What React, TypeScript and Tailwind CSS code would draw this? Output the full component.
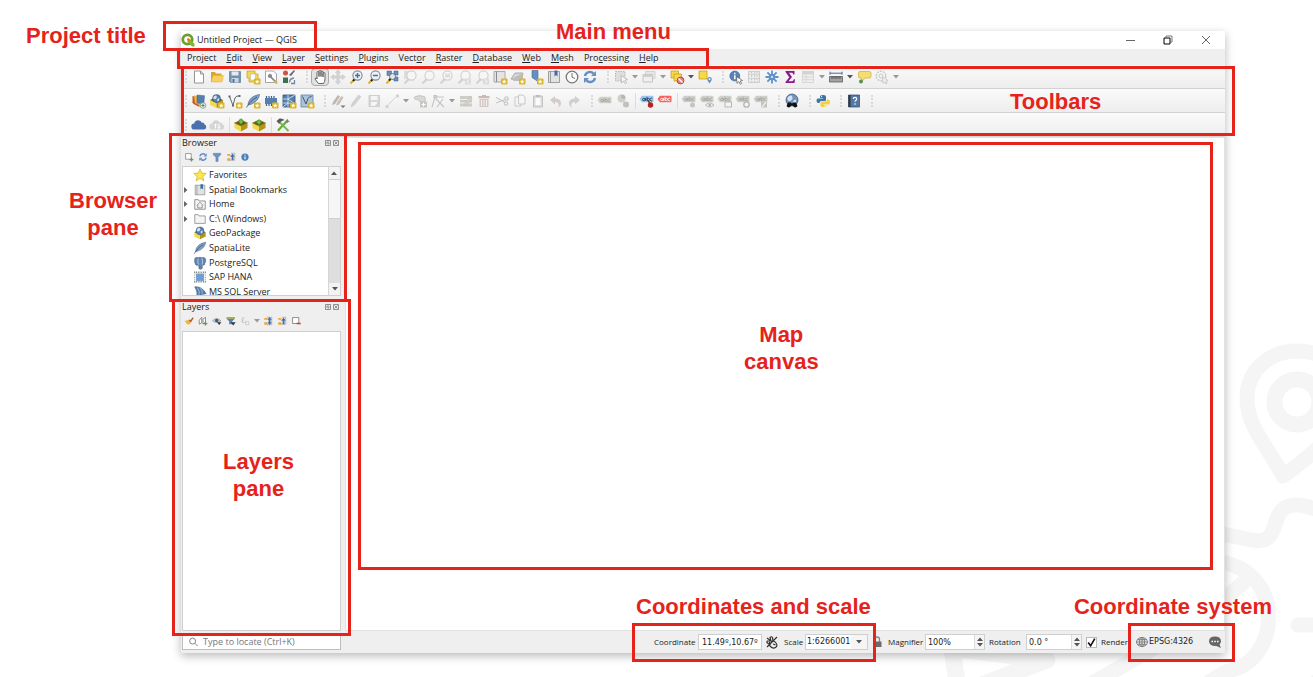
import React from "react";

type Children = { children?: React.ReactNode };

/* ---------- icon building blocks ---------- */

const G = "#d2d2d2";
const GD = "#bcbcbc";
const BLUE = "#6490c4";
const YEL = "#f5d949";
const GOLD = "#d8b52c";

const Badge = ({ c = GOLD }: { c?: string }) => (
  <g>
    <rect x="9" y="9.5" width="6.5" height="6" rx="1" fill={c} />
    <path d="M12.2 10.2l.7 1.6 1.7.2-1.3 1 .4 1.7-1.5-.9-1.5.9.4-1.7-1.3-1 1.7-.2z" fill="#fffbe0" />
  </g>
);

const Lens = ({ off, children }: { off?: boolean } & Children) => (
  <g fill="none">
    <path d="M7 9.8L2.5 14.5" stroke={off ? G : GOLD} strokeWidth="2" />
    <path d="M7 9.8L5 12" stroke={off ? G : "#222"} strokeWidth="2" />
    <circle cx="9.5" cy="6.5" r="4.6" fill={off ? "#f6f6f6" : "#eaf1f8"} stroke={off ? "#cfcfcf" : "#888"} strokeWidth="1.1" />
    {children}
  </g>
);

const Tag = ({ fill = "#d0d0cb", ink = "#a4a4a0" }: { fill?: string; ink?: string }) => (
  <g>
    <path d="M.5 6l2.400-3.200H13.500q1 0 1 1v4.400q0 1-1 1H2.900z" fill={fill} />
    <g fill="none" stroke={ink} strokeWidth=".9">
      <circle cx="4.800" cy="6.500" r="1.200" />
      <path d="M6.400 5v2.800M8 3.800v4" />
      <circle cx="9.300" cy="6.500" r="1.200" />
      <path d="M13.200 5.400a1.400 1.400 0 100 2.200" />
    </g>
  </g>
);

const Box = ({ children }: Children) => (
  <g>
    <path d="M1.500 6L8 9v5.500L1.500 11z" fill="#f3da4b" />
    <path d="M8 9l6.500-3v5L8 14.500z" fill="#b8931a" />
    <path d="M1.500 6L8 3l6.500 3L8 9z" fill="#6a5814" stroke="#8d730f" strokeWidth=".6" />
    {children}
  </g>
);

const Globe = ({ x = 8, y = 6, r = 4.5, c = "#4f7fb5" }: { x?: number; y?: number; r?: number; c?: string }) => (
  <g transform={`translate(${x} ${y}) scale(${r})`}>
    <circle r="1" fill={c} stroke="#35506f" strokeWidth=".12" />
    <path d="M-.8-.3Q-.5-.9 0-.7L.1-.2-.3.2-.7.1zM.2.1L.7-.1.6.6.2.7z" fill="#d5e2ef" />
  </g>
);

const Sync = ({ c = BLUE }: { c?: string }) => (
  <g fill="none" stroke={c} strokeWidth="2.4">
    <path d="M3 7a5 5 0 018.6-2.4" />
    <path d="M13 9a5 5 0 01-8.6 2.4" />
    <path d="M14 2v5H9zM2 14V9h5z" fill={c} stroke="none" />
  </g>
);

const Feather = () => (
  <g>
    <path d="M3 12C3.500 6 8 2.500 14.500 1.500 14 5 12 9 5.500 11.500z" fill="#7ba1cc" stroke="#47617e" strokeWidth=".6" />
    <path d="M1.500 14.500C4 10 7.500 6.500 12 4" fill="none" stroke="#3c4d60" strokeWidth=".8" />
  </g>
);

const Pencil = ({ c = G }: { c?: string }) => (
  <path d="M3 14l1-3.500L10.500 2l2.500 1.800L6.300 12z" fill={c} stroke="#c4c4c4" strokeWidth=".5" />
);

const icons: Record<string, React.ReactNode> = {
  new: <path d="M3.500 2h6l3 3v9h-9zM9.500 2v3h3" fill="#fff" stroke="#8a8a8a" strokeWidth=".9" />,
  open: (
    <g>
      <path d="M2 3h4l1 1.500h5.500V13H2z" fill="#d9a62b" />
      <path d="M2 13l2-6.500h10.500L13 13z" fill="#f6d162" stroke="#e0ae35" strokeWidth=".5" />
    </g>
  ),
  save: (
    <g>
      <path d="M2.500 2.500h11v11h-10l-1-1z" fill="#6d93bd" stroke="#52708f" strokeWidth=".6" />
      <path d="M4.500 2.500h7v4h-7z" fill="#e9e9e9" />
      <path d="M4.500 9h7v4.500h-7z" fill="#cfd6de" />
      <path d="M5.500 10h2v3.500h-2z" fill="#52708f" />
    </g>
  ),
  layout: (
    <g>
      <path d="M2 2h8v3h3v8H4V9H2z" fill={YEL} stroke="#c79b1f" strokeWidth=".7" />
      <path d="M5.500 5h5v6h-5z" fill="#fff" stroke="#aaa" strokeWidth=".5" />
      <Badge />
    </g>
  ),
  layouts: (
    <g>
      <path d="M2.500 2h8l3 3v8.500h-11z" fill="#fff" stroke="#8f8f8f" strokeWidth=".8" />
      <path d="M5 6l2-1.500L9 6v2l4 4-1.200 1.200L7.500 9 5 8.500z" fill="#8a8a8a" />
      <path d="M11.500 12l2.500 2.500" stroke={GOLD} strokeWidth="2" />
    </g>
  ),
  style: (
    <g>
      <circle cx="4.500" cy="4" r="2.500" fill="#d2503d" />
      <path d="M2 8.500h5v5.500H2z" fill="#3f6f4c" />
      <path d="M8 6l5-5 1 1-4 5z" fill="#6b6b6b" />
      <path d="M8.500 13.500q0-4 4.500-4.500M10 14.500h3.500V11" fill="none" stroke="#6b8ba8" strokeWidth="1.300" />
    </g>
  ),
  hand: (
    <path
      d="M5 10V3.500a1 1 0 012 0V7.500V2.500a1 1 0 012 0V7.500V3a1 1 0 012 0V8V4.500a1 1 0 012 0V10Q13 12.500 11.500 14.500H6.500L3 10Q3.300 8 5 9.500z"
      fill="#fff"
      stroke="#555"
      strokeWidth=".9"
      strokeLinejoin="round"
    />
  ),
  pansel: <path d="M8 1l2 2.500H9V7h3.500V6L15 8l-2.500 2V9H9v3.500h1L8 15l-2-2.500h1V9H3.500v1L1 8l2.500-2v1H7V3.500H6z" fill={G} stroke={G} strokeWidth="1.200" />,
  zoomin: (
    <Lens>
      <path d="M9.500 4v5M7 6.500h5" stroke="#3f71b0" strokeWidth="1.500" />
    </Lens>
  ),
  zoomout: (
    <Lens>
      <path d="M7 6.500h5" stroke="#3f71b0" strokeWidth="1.500" />
    </Lens>
  ),
  zoomfull: (
    <g>
      <path d="M3 2h4.500v4.500H3zM10 2h4v4h-4zM10 8h4v4h-4z" fill={BLUE} stroke="#46688f" strokeWidth=".6" />
      <circle cx="8.500" cy="7.500" r="3" fill="#dfe9f3" stroke="#555" strokeWidth=".8" />
      <path d="M6.500 10L2.500 14.500" stroke={GOLD} strokeWidth="2" />
      <path d="M6.500 10L5 11.500" stroke="#222" strokeWidth="2" />
    </g>
  ),
  zoomsel: (
    <g>
      <path d="M2 2h7v8H2z" fill="#dcdcdc" />
      <Lens off />
    </g>
  ),
  zoomlayer: <Lens off />,
  zoomnative: (
    <Lens off>
      <path d="M8 4.500v4M11 4.500v4M9.500 5.500v.8M9.500 7.200v.8" stroke="#c4c4c4" />
    </Lens>
  ),
  zoomlast: (
    <g>
      <Lens off />
      <path d="M9 9.500h6v6H9z" fill="#dadada" />
      <path d="M13 10.500l-2 2 2 2" fill="none" stroke="#fff" />
    </g>
  ),
  zoomnext: (
    <g>
      <Lens off />
      <path d="M9 9.500h6v6H9z" fill="#dadada" />
      <path d="M11 10.500l2 2-2 2" fill="none" stroke="#fff" />
    </g>
  ),
  newmap: (
    <g>
      <path d="M2 2.500h11V13H2z" fill="#e4e4e4" stroke="#9a9a9a" strokeWidth=".8" />
      <path d="M4.500 2.500V13" stroke="#8a8a8a" />
      <Badge />
    </g>
  ),
  new3d: (
    <g>
      <path d="M1 10l4-6h8l-1 6z" fill="#d8d8d8" stroke="#9a9a9a" strokeWidth=".8" />
      <path d="M1 10l3 2h8l1-8" fill="#bdbdbd" />
      <Badge />
    </g>
  ),
  newbook: (
    <g>
      <path d="M4 1.500h6v11l-3-2-3-2z" fill={BLUE} stroke="#45688f" strokeWidth=".6" />
      <Badge />
    </g>
  ),
  bookmarks: (
    <g>
      <path d="M2.500 2.500h11v11h-11z" fill="#e2e2e2" stroke="#8c8c8c" strokeWidth=".8" />
      <path d="M4.500 2.500v11" stroke="#8c8c8c" strokeWidth=".8" />
      <path d="M8.500 1.500h3v6L10 6 8.500 7.500z" fill="#3e6ea8" />
    </g>
  ),
  clock: (
    <g fill="none" stroke="#777">
      <circle cx="8" cy="8" r="5.800" fill="#fafafa" strokeWidth="1.300" />
      <path d="M8 4v4.300l3 1.200" />
    </g>
  ),
  sync: <Sync />,
  select: (
    <g>
      <path d="M2.500 2.500h9.500v9.500H2.500z" fill="#dededa" stroke="#aaa" strokeWidth=".8" strokeDasharray="1.500 1" />
      <path d="M8 6.500l6.500 4-2.600.6 1.800 2.700-1.500.9-1.700-2.800L8.500 14z" fill="#f8f8f8" stroke="#aaa" strokeWidth=".7" />
    </g>
  ),
  selval: (
    <g>
      <path d="M4.500 2.500H14v7H4.500z" fill="#e6e6e6" stroke={G} />
      <path d="M2 5.500h9.500v7.500H2z" fill="#efefef" stroke="#c0c0c0" strokeWidth=".9" />
      <path d="M2 5.500h9.500V8H2z" fill="#cfcfcf" />
    </g>
  ),
  deselect: (
    <g>
      <path d="M2 2h7.500v7H2z" fill={YEL} stroke="#c7a31b" strokeWidth=".8" />
      <path d="M5 5h7.500v7H5z" fill={YEL} stroke="#c7a31b" strokeWidth=".8" />
      <circle cx="11.500" cy="11.500" r="3.400" fill="#e08983" stroke="#c8322b" strokeWidth=".9" />
      <path d="M9.500 9.500l4 4" stroke="#fff" strokeWidth="1.200" />
    </g>
  ),
  selloc: (
    <g>
      <path d="M2 2h8v8H2z" fill={YEL} stroke="#c7a31b" strokeWidth=".8" />
      <path d="M12.500 14.500q-2.300-3-2.300-4.200a2.300 2.300 0 014.600 0q0 1.200-2.300 4.200z" fill="#6c93be" />
      <circle cx="12.500" cy="10.200" r=".9" fill="#fff" />
    </g>
  ),
  identify: (
    <g>
      <circle cx="6.800" cy="7" r="5" fill="#5683b8" stroke="#3c6390" strokeWidth=".6" />
      <path d="M6.800 3.700v1.500M6.800 6.300v4" stroke="#fff" strokeWidth="1.500" />
      <path d="M8.500 7.500l6 4-2.400.5 1.500 2.500-1.300.7-1.400-2.600-1.900 1.700z" fill="#fff" stroke="#555" strokeWidth=".7" />
    </g>
  ),
  calc: (
    <g stroke="#c8c8c8" strokeWidth=".9" fill="#ececec">
      <path d="M2.500 2.500h11v11h-11z" />
      <path d="M2.500 5.500h11M2.500 9.500h11M5.500 3v10M8.500 3v10M11 3v10" strokeDasharray="2 1" />
    </g>
  ),
  gear: (
    <g stroke="#5f92ca" strokeWidth="1.800">
      <path d="M8 1.500v13M1.500 8h13M3.400 3.400l9.200 9.200M12.600 3.400l-9.200 9.200" />
      <circle cx="8" cy="8" r="3.200" fill="#5f92ca" stroke="none" />
      <circle cx="8" cy="8" r="1.100" fill="#eef" stroke="none" />
    </g>
  ),
  sigma: <path d="M3.500 2h9v3.500h-1.200q-.2-1.700-1.700-1.700H7L10 7.900 6.500 12.200h3.300q1.700 0 2-2h1.200L12.500 14h-9v-1L7.300 8.200 3.500 3z" fill="#8d1a90" />,
  table: (
    <g stroke="#d4d4d4" fill="#f0f0f0" strokeWidth=".9">
      <path d="M2.500 2.500h11v11h-11z" />
      <path d="M2.500 2.500h11V5h-11z" fill="#d4d4d4" />
      <path d="M2.500 8h11M2.500 10.700h11M6 5v8" />
    </g>
  ),
  measure: (
    <g>
      <path d="M2 4.200h12M2 2.700v3M14 2.700v3" stroke="#3e6a9c" strokeWidth="1" />
      <path d="M1.500 7.500h13V13h-13z" fill="#a3a3a3" stroke="#5e5e5e" strokeWidth=".8" />
      <path d="M4 7.500v2.500M6 7.500v2M8 7.500v2.500M10 7.500v2M12 7.500v2.500" stroke="#333" strokeWidth=".8" />
    </g>
  ),
  tips: (
    <g>
      <path d="M4 2.500h9.500q1.500 0 1.500 1.500v3.500q0 1.500-1.500 1.500H9l-3.500 4V9H4Q2.500 9 2.500 7.500V4q0-1.500 1.500-1.500z" fill="#f4de72" stroke="#cdac35" strokeWidth=".7" />
      <circle cx="5" cy="12.500" r="2" fill="#5c8f58" />
    </g>
  ),
  osm: (
    <g fill="none" stroke="#cacaca">
      <circle cx="7" cy="7" r="4.800" strokeWidth="1.500" strokeDasharray="2 1" />
      <circle cx="7" cy="7" r="2" />
      <path d="M8.500 8l5.500 3.500-2.200.6 1.300 2.100-1.200.8-1.400-2.300-1.500 1.500z" fill="#f3f3f3" />
    </g>
  ),
  dsm: (
    <g>
      <path d="M1.500 3l6 1.500-1 7.500-5-2z" fill="#c65a33" />
      <path d="M3 2.500l7 1v9l-6-2z" fill="#efb92e" />
      <path d="M6 2l7.500.7-.7 8L6 10z" fill="#557fb0" stroke="#3e618b" strokeWidth=".5" />
      <path d="M1.500 9l7 3v2l-6-3z" fill="#c65a33" />
      <circle cx="12" cy="12.500" r="2.800" fill="#eee" stroke="#7a9b74" strokeWidth=".8" />
      <path d="M12 11v3M10.500 12.500h3" stroke="#4e8a45" />
    </g>
  ),
  gpkg: (
    <g>
      <path d="M1.500 7L8 10v5L1.500 12z" fill="#f3da4b" />
      <path d="M14.500 7L8 10v5l6.500-3z" fill="#b8931a" />
      <path d="M1.500 7L8 4l6.500 3L8 10z" fill="#6a5814" />
      <Globe x={8} y={5.500} r={4.500} />
    </g>
  ),
  gpkgnew: (
    <g>
      <path d="M1 7l6.500 3v5L1 12z" fill="#f3da4b" />
      <path d="M14 7l-6.500 3v5L14 12z" fill="#b8931a" />
      <path d="M1 7l6.500-3L14 7l-6.500 3z" fill="#6a5814" />
      <Globe x={7.500} y={5.500} r={4} />
      <Badge />
    </g>
  ),
  shp: (
    <g>
      <path d="M2.500 3.500l3.500 9 2-7.500q1-2.500 4-2" fill="none" stroke="#5f6670" strokeWidth="1" />
      <path d="M1.500 2.500h2v2h-2zM5 11.500h2v2H5zM11.500 2h2v2h-2z" fill="#5f6670" />
      <Badge />
    </g>
  ),
  lite: (
    <g>
      <Feather />
      <Badge />
    </g>
  ),
  mem: (
    <g>
      <path d="M2 5h12v6H2z" fill="#557fb0" />
      <path d="M3.500 3v2M6 3v2M8.500 3v2M11 3v2M3.500 11v2M6 11v2M8.500 11v2" stroke="#3e618b" strokeWidth="1.200" />
      <Badge />
    </g>
  ),
  mesh: (
    <g>
      <path d="M2 2h12v12H2z" fill="#557fb0" stroke="#2f4e75" strokeWidth=".8" />
      <path d="M2 6h5l7-4M7 2v12M2 14l5-4 7 1M7 6l7 5M2 10h5" fill="none" stroke="#e2ecf6" strokeWidth=".8" />
      <Badge />
    </g>
  ),
  virt: (
    <g>
      <path d="M2 2h12v12H2z" fill="#a9c4df" stroke="#5f81a5" strokeWidth=".8" />
      <path d="M3.500 3.500L7 11l2-5.500q1-2 3.500-2" fill="none" stroke="#4d5661" strokeWidth="1" />
      <Badge />
    </g>
  ),
  edits: (
    <g>
      <path d="M2 12l1-3 5-7 2 1.500-5 7.500z" fill="#bdb5b0" />
      <path d="M6 12.500l1-3L11.500 3l2 1.500-4.500 7z" fill="#c6c0b8" />
      <path d="M10.500 12.500h5l-2.500 2.500z" fill="#777" />
    </g>
  ),
  pencil: <Pencil />,
  saveoff: (
    <g>
      <path d="M3 2.500h10.500v11H3z" fill="#d8d8d8" stroke="#c8c8c8" strokeWidth=".8" />
      <path d="M5 3h6.500v4H5zM5 9h6v4H5z" fill="#f5f5f5" />
      <path d="M9 13l4-5 1.500 1-4 5z" fill={G} />
    </g>
  ),
  line: (
    <g>
      <path d="M3 13L13 3" stroke={G} />
      <path d="M1.500 12h3v3h-3zM12 1.500h3v3h-3z" fill={G} />
    </g>
  ),
  addpoly: (
    <g>
      <path d="M2.500 4q4-2.500 10-.5 1.500 2 .5 5H7.500q-1-2.500-4-2Q1.500 6 2.500 4z" fill="#d8d8d4" stroke="#b9b9b9" strokeWidth=".7" />
      <path d="M8 8.500h7v6H8z" fill="#c8c8c4" />
      <path d="M11.500 9.500v4M9.500 11.500h4" stroke="#fff" />
    </g>
  ),
  vertex: (
    <g fill="none" stroke="#c4c4c4" strokeWidth="1.100">
      <path d="M2 14L5 4h9M6 6l8 8M13 6l-6 8" />
      <path d="M4 2.500h2.500V5H4z" fill={G} />
    </g>
  ),
  modify: (
    <g>
      <path d="M2 3h12v10.500H2z" fill="#cdcdc7" />
      <path d="M2 6.500h12M2 10h12" stroke="#eee" />
      <path d="M6 12l6-8 2 1.500-6 7.500z" fill="#dad4ca" stroke="#b5b0a8" strokeWidth=".5" />
    </g>
  ),
  trash: (
    <g>
      <path d="M2.500 3h11v2.200h-11zM6 2h4v1.500H6z" fill="#cbb9b5" />
      <path d="M3.500 6h9v8h-9z" fill="#d5c8c5" />
      <path d="M5.500 7v6M8 7v6M10.500 7v6" stroke="#f2f2f2" />
    </g>
  ),
  cut: (
    <g fill="none" stroke="#c8c8c8" strokeWidth="1.300">
      <path d="M2 4.500l8.500 4.500M2 10l9-3.500" />
      <circle cx="12.500" cy="5.500" r="1.700" />
      <circle cx="12" cy="10.500" r="1.700" />
    </g>
  ),
  copy: (
    <g fill="#f6f6f6" stroke="#c8c8c8">
      <path d="M3 4h5l1 1v8H3z" />
      <path d="M6.500 2H11l2 2v7H6.500z" />
    </g>
  ),
  paste: (
    <g>
      <path d="M3.500 3h9v11h-9z" fill="#dcdcdc" stroke="#c4c4c4" />
      <path d="M5.500 5h5v7h-5z" fill="#fbfbfb" />
      <path d="M6 2h4v2H6z" fill={GD} />
    </g>
  ),
  undo: <path d="M2 6l5-4v2.500q6 0 6 4.500 0 3-3 4.500 1-1.500.7-3Q10.200 8 7 8v2.500z" fill="#d3cdca" transform="translate(0 1)" />,
  redo: <path d="M14 6L9 2v2.500Q3 4.500 3 9q0 3 3 4.500-1-1.500-.7-3Q5.800 8 9 8v2.500z" fill="#cdd1cc" transform="translate(0 1)" />,
  label: (
    <g transform="translate(0 1)">
      <Tag />
    </g>
  ),
  diagram: (
    <g>
      <circle cx="6.500" cy="5.500" r="4" fill="#cfcfcb" />
      <path d="M6.500 5.500V1.500a4 4 0 014 4z" fill="#b5b5b0" />
      <circle cx="11" cy="11.500" r="3" fill="#c0c0bc" />
    </g>
  ),
  labelpin: (
    <g>
      <Tag fill="#9cc6f2" ink="#24384e" />
      <path d="M9 8l2 2" stroke="#333" strokeWidth="1.200" />
      <circle cx="11.500" cy="12" r="2.700" fill="#b8211d" />
    </g>
  ),
  labelred: <Tag fill="#f8605c" ink="#fff" />,
  lab1: (
    <g>
      <Tag />
      <circle cx="11.500" cy="12" r="2.500" fill="#c9c2c2" />
    </g>
  ),
  lab2: (
    <g>
      <Tag />
      <path d="M6.500 12q4-4 8.500 0-4.500 4-8.500 0z" fill="#efefef" stroke="#aaa" strokeWidth=".8" />
      <circle cx="10.700" cy="12" r="1.200" fill="#aaa" />
    </g>
  ),
  lab3: (
    <g>
      <Tag />
      <path d="M8 9h6.500v5H8z" fill="#f4f4f4" stroke="#b5b5b5" />
    </g>
  ),
  lab4: (
    <g>
      <Tag />
      <circle cx="11.500" cy="11.500" r="2.700" fill="#f2f2f2" stroke="#b5b5b5" strokeWidth="1.300" />
    </g>
  ),
  lab5: (
    <g>
      <Tag />
      <path d="M8 9h6v5.500H8z" fill="#c3c3be" />
      <path d="M9 14l4-5" stroke="#eee" strokeWidth="1.300" />
    </g>
  ),
  search: (
    <g>
      <Globe x={8} y={7} r={6} c="#7295bd" />
      <path d="M2.500 13l1.500-3.500h3l.5 1h1l.5-1h3l1.500 3.500q-1.500 2.500-4 .8L9 12.500H7l-.5 1.300q-2.500 1.700-4-.8z" fill="#111" />
    </g>
  ),
  python: (
    <g>
      <path d="M8 2q3-.2 3 1.500V7Q11 8 10 8H6.500Q4.500 8 4.500 10H3.300Q1.500 10 1.500 7.500T3.500 5.500H8V5H5V3.500Q5 2 8 2z" fill="#3a74a8" />
      <path d="M8.500 14q-3 .2-3-1.500V10q0-1.500 1.500-1.500h3.500q1.500 0 1.500-2h1q2 0 2 2.500t-2 2.500H8.500v.5h3V13q0 1-3 1z" fill="#f6cf3e" />
      <circle cx="6.600" cy="3.600" r=".6" fill="#fff" />
      <circle cx="10" cy="12.700" r=".6" fill="#fff" />
    </g>
  ),
  help: (
    <g>
      <path d="M2.500 2h11v12h-11z" fill="#5478a2" stroke="#2f4a69" strokeWidth=".7" />
      <path d="M2.500 2h2v12h-2z" fill="#32373d" />
      <path d="M7.300 6q0-1.600 1.700-1.600t1.700 1.500q0 1-1 1.500-.7.400-.7 1.400M9 10.200v1.500" fill="none" stroke="#fff" strokeWidth="1.200" />
    </g>
  ),
  cloud: <path d="M3.500 12.500a3 3 0 01-.3-6Q4 3.200 7.300 3.200q2.700 0 3.500 2.500 1-.4 1.900.3.900.7.800 1.600 1.800.4 1.800 2.500 0 2.200-2.300 2.400z" fill="#4a70ae" />,
  cloudoff: (
    <g>
      <path d="M3.500 12.500a3 3 0 01-.3-6Q4 3.200 7.300 3.200q2.700 0 3.500 2.500 1-.4 1.900.3.900.7.800 1.600 1.800.4 1.800 2.500 0 2.200-2.300 2.400z" fill="#d5d5d5" />
      <path d="M6.500 11.500V7M5 8.500L6.500 7 8 8.500M10 7v4.500M8.700 10L10 11.500l1.400-1.500" fill="none" stroke="#fff" />
    </g>
  ),
  boxdown: (
    <Box>
      <path d="M8 7.500L5 4h1.800V2h2.400v2H11z" fill="#6cc83f" stroke="#2e6e15" strokeWidth=".4" />
    </Box>
  ),
  boxup: (
    <Box>
      <path d="M8 2.500L5 6h1.800v1.500h2.400V6H11z" fill="#6cc83f" stroke="#2e6e15" strokeWidth=".4" />
    </Box>
  ),
  tools: (
    <g>
      <path d="M3 13.500L12 4" stroke="#5bb530" strokeWidth="2.200" />
      <path d="M4.500 5L13.500 14" stroke="#7fae56" strokeWidth="1.800" />
      <path d="M1.500 4l3-2.500q3-.5 5 1.500L6 4.500 4 7z" fill="#5a5a5a" />
      <path d="M10.500 4.500l2-3 .5 2 2 .5-3 2z" fill="#7b7b7b" />
    </g>
  ),
  /* dock toolbars */
  addsel: (
    <g>
      <path d="M2.500 2.500h9v9h-9z" fill="#fff" stroke="#888" strokeWidth="1.300" />
      <path d="M12 9v6M9 12h6" stroke="#58a04a" strokeWidth="2" />
    </g>
  ),
  filter: <path d="M2 2h12v2.500L9.800 8.500V15H6.200V8.500L2 4.500z" fill="#6c93c0" stroke="#4d719c" strokeWidth=".6" />,
  filter2: (
    <g>
      <path d="M1 2h13v2.500L10 8.500V13H5V8.500L1 4.500z" fill="#5b83b0" />
      <path d="M1 2h13v2.500H1z" fill="#b5b64a" />
      <path d="M7.500 10h8l-4 5z" fill="#333" />
    </g>
  ),
  collapse: (
    <g>
      <path d="M2 3h5v3H2zM2 10h5v4H2z" fill="#eda43c" />
      <path d="M6 7h6M6 13h8V2H8" fill="none" stroke="#999" />
      <path d="M10.500 2.500L14 7h-2v6H9V7H7z" fill="#3f70ad" />
    </g>
  ),
  expand: (
    <g>
      <path d="M2 3h5v3H2zM2 10h5v4H2z" fill="#eda43c" />
      <path d="M6 14h8V2H6" fill="none" stroke="#999" />
      <path d="M10.500 1.500L14 6h-2v4h2l-3.500 4.500L7 10h2V6H7z" fill="#3f70ad" />
    </g>
  ),
  info: (
    <g>
      <circle cx="8" cy="8" r="5.800" fill="#4c80ba" />
      <path d="M8 4.300v1.800M8 7.200v4.500" stroke="#fff" strokeWidth="1.800" />
    </g>
  ),
  brush: (
    <g>
      <path d="M9 8l5-6 1.500 1.500L11 10z" fill="#a5632e" />
      <path d="M1 8l6-1.500 4 4L8 14Q4 13 1 8z" fill="#f0b53a" />
      <path d="M7 6.500l4 4 1-1.500-3.500-3.500z" fill="#d9472f" />
    </g>
  ),
  group: (
    <g>
      <path d="M2 7l4-5v9l-4 2zM8 5l4-3v8l-4 3z" fill="#fafafa" stroke="#777" strokeWidth="1.300" />
      <path d="M12 9v6M9 12h6" stroke="#58a04a" strokeWidth="2" />
    </g>
  ),
  eye: (
    <g>
      <path d="M1 7.500Q7 1 14 7.500 7 13 1 7.500z" fill="#ddd" stroke="#777" />
      <circle cx="7.500" cy="7" r="2.800" fill="#355f8c" />
      <path d="M8 10h7l-3.500 4.500z" fill="#333" />
    </g>
  ),
  expr: (
    <g fill="none" stroke="#bbb" strokeWidth="1.400">
      <path d="M7 3Q3 2 3 4.500 3 6 5.500 6.500 2.500 7 3 9.500 4 11 7 10" />
      <path d="M9 9h5v5H9z" strokeDasharray="2 1" />
    </g>
  ),
  remove: (
    <g>
      <path d="M2.500 2.500h10v9.500h-10z" fill="#fff" stroke="#777" strokeWidth="1.300" />
      <path d="M9 12h6.500" stroke="#d63b33" strokeWidth="2.500" />
    </g>
  ),
  /* browser tree */
  star: <path d="M8 1l2 4.800 5.200.4-4 3.400 1.300 5.100L8 11.900l-4.500 2.800 1.300-5.100-4-3.400L6 5.800z" fill="#fbe84e" stroke="#d0b029" strokeWidth=".8" />,
  home: (
    <g fill="#f4f4f4" stroke="#7d7d7d" strokeWidth=".9">
      <path d="M2 3h4l1 1.500h7V14H2z" />
      <path d="M4.500 9.500L8 6l3.500 3.500M5.500 9v3.500h5V9" />
    </g>
  ),
  folder: <path d="M2 3h4l1 1.500h7V13H2z" fill="#f4f4f4" stroke="#8a8a8a" strokeWidth=".9" />,
  feather: <Feather />,
  pg: (
    <g>
      <path d="M2 3q1-2 4-1 2-1 4 0 4-1 4.500 2 .3 2.500-1.500 5 1 .8-.5 1.200-1.500.3-2-.2V14q-2 2-3.500.5L6.500 10Q3 12 2 7z" fill="#5f88b9" stroke="#33557f" strokeWidth=".7" />
      <path d="M6 3q-1.500 3 .5 7M10 2.500q1.800 3 .5 7.500" fill="none" stroke="#d5e0ec" strokeWidth=".8" />
    </g>
  ),
  hana: (
    <g>
      <path d="M1.500 2.500h13M1.500 13.500h13" stroke="#777" strokeWidth="1.600" strokeDasharray="1 1" />
      <path d="M2 2v12.500M14 2v12.500" stroke="#999" strokeWidth="1.200" strokeDasharray="1 1" />
      <path d="M3.500 4h9v8.500h-9z" fill="#6f9dcd" />
    </g>
  ),
  mssql: (
    <g>
      <path d="M2 2q8-1 13 8-5 0-11 4 2-6-2-12z" fill="#537cae" stroke="#34577f" strokeWidth=".6" />
      <path d="M5 3q3 4 2 8M8.500 3.500q2.500 3 2 6.500" fill="none" stroke="#dbe6f1" strokeWidth=".7" />
    </g>
  ),
};

const Icon = ({ name, className = "size-4" }: { name: string; className?: string }) => (
  <svg viewBox="0 0 16 16" className={className} aria-hidden="true">
    {icons[name]}
  </svg>
);

const Caret = ({ dark }: { dark?: boolean }) => (
  <svg viewBox="0 0 6 4" className="h-1 w-1.5" aria-hidden="true">
    <path d="M0 0h6L3 3.500z" fill={dark ? "#555" : "#999"} />
  </svg>
);

/* ---------- toolbars ---------- */

// "|" handle, "-" separator, "v"/"V" drop-down arrow (disabled/enabled), otherwise an icon name
const rowOne =
  "new open save layout layouts style | hand pansel zoomin zoomout zoomfull zoomsel zoomlayer zoomnative zoomlast zoomnext newmap new3d newbook bookmarks clock sync | select v selval v deselect V selloc | identify calc gear sigma table v measure V tips osm v";
const rowTwo =
  "dsm gpkgnew shp lite mem mesh virt | edits pencil saveoff line v addpoly vertex v modify trash cut copy paste undo redo | label diagram - labelpin labelred - lab1 lab2 lab3 lab4 lab5 | search | python | help |";
const rowThree = "cloud cloudoff - boxdown boxup - tools";

const Dots = () => <span className="h-3 w-0 border-l-2 border-dotted border-[#dadada]" />;

const Toolbar = ({ items, label }: { items: string; label: string }) => (
  <div role="toolbar" aria-label={label} className="flex h-6 items-center border-b border-[#d2d2d2] bg-linear-to-b from-[#fafafa] to-[#eeeeee]">
    <span className="flex w-[9px] justify-end pr-[3px]">
      <Dots />
    </span>
    {items.split(" ").map((it, i) => {
      if (it === "|")
        return (
          <span key={i} className="flex w-[13px] justify-end pr-[3px]">
            <Dots />
          </span>
        );
      if (it === "-")
        return (
          <span key={i} className="flex w-1.5 justify-center">
            <span className="h-4 w-px bg-[#dcdcdc]" />
          </span>
        );
      if (it === "v" || it === "V")
        return (
          <button key={i} type="button" aria-label="More options" className="flex h-4 w-2.5 items-center justify-center">
            <Caret dark={it === "V"} />
          </button>
        );
      return (
        <button
          key={i}
          type="button"
          aria-label={it}
          className={
            it === "hand"
              ? "flex size-[18px] items-center justify-center rounded-sm border border-[#a9a9a9] bg-[#e2e2e2]"
              : "flex size-[18px] items-center justify-center"
          }
        >
          <Icon name={it} />
        </button>
      );
    })}
  </div>
);

/* ---------- annotations ---------- */

const Frame = ({ className }: { className: string }) => (
  <div aria-hidden="true" className={`pointer-events-none absolute z-20 border-3 border-[#e5231b] ${className}`} />
);

const Note = ({ className, children }: { className: string } & Children) => (
  <p className={`pointer-events-none absolute z-20 text-center font-['Liberation_Sans',sans-serif] text-[22px] leading-[27px] font-bold whitespace-nowrap text-[#e5231b] ${className}`}>
    {children}
  </p>
);

/* ---------- window parts ---------- */

const menus: [string, string, string][] = [
  ["Pro", "j", "ect"],
  ["", "E", "dit"],
  ["", "V", "iew"],
  ["", "L", "ayer"],
  ["", "S", "ettings"],
  ["", "P", "lugins"],
  ["Vect", "o", "r"],
  ["", "R", "aster"],
  ["", "D", "atabase"],
  ["", "W", "eb"],
  ["", "M", "esh"],
  ["Pro", "c", "essing"],
  ["", "H", "elp"],
];

const tree: [string, string, boolean][] = [
  ["star", "Favorites", false],
  ["bookmarks", "Spatial Bookmarks", true],
  ["home", "Home", true],
  ["folder", "C:\\ (Windows)", true],
  ["gpkg", "GeoPackage", false],
  ["feather", "SpatiaLite", false],
  ["pg", "PostgreSQL", false],
  ["hana", "SAP HANA", false],
  ["mssql", "MS SQL Server", false],
];

const DockTitle = ({ children }: Children) => (
  <div className="flex h-3 items-center justify-between pr-1.5">
    <h2 className="text-[9px] leading-3 text-[#222]">{children}</h2>
    <div className="flex gap-0.5">
      <button type="button" aria-label="Float" className="flex size-1.5 items-center justify-center">
        <svg viewBox="0 0 6 6" className="size-1.5" fill="none" stroke="#777" strokeWidth=".8">
          <path d="M.5.5h5v5h-5zM2 3.800V2h2M2.500 4h1.500V2.500" />
        </svg>
      </button>
      <button type="button" aria-label="Close" className="flex size-1.5 items-center justify-center">
        <svg viewBox="0 0 6 6" className="size-1.5" fill="none" stroke="#777" strokeWidth=".8">
          <path d="M.5.5h5v5h-5zM1.500 1.500l3 3M4.500 1.500l-3 3" />
        </svg>
      </button>
    </div>
  </div>
);

const DockTools = ({ items }: { items: string }) => (
  <div className="flex h-4 items-center">
    {items.split(" ").map((it, i) =>
      it === "v" ? (
        <span key={i} className="flex w-[9px] justify-center">
          <Caret />
        </span>
      ) : (
        <button key={i} type="button" aria-label={it} className="flex w-3.5 justify-center">
          <Icon name={it} className="size-2.5" />
        </button>
      ),
    )}
  </div>
);

const Spin = ({ id, value, className }: { id: string; value: string; className: string }) => (
  <div className={`flex h-4 items-center border border-[#cfcfcf] bg-white ${className}`}>
    <input id={id} defaultValue={value} className="h-full w-0 flex-1 bg-transparent pl-0.5 font-['DejaVu_Sans',sans-serif] text-[8px] text-[#222] outline-none" />
    <div className="flex h-full w-2.5 flex-col items-center justify-center gap-0.5 border-l border-[#dcdcdc] bg-[#f4f4f4]">
      <button type="button" aria-label="Increase" className="rotate-180">
        <Caret dark />
      </button>
      <button type="button" aria-label="Decrease">
        <Caret dark />
      </button>
    </div>
  </div>
);

const Backdrop = () => (
  <svg viewBox="933 337 380 340" className="absolute right-0 bottom-0 h-[340px] w-[380px]" fill="none" stroke="#f5f5f5" strokeWidth="15" strokeLinejoin="round" strokeLinecap="round" aria-hidden="true">
    <path d="M1283 476C1268 446 1247 428 1247 398 1247 370 1270 351 1297 351 1330 351 1350 375 1347 400 1345 428 1312 455 1283 476z" />
    <circle cx="1297" cy="402" r="22.500" strokeWidth="16" />
    <path d="M1200 530Q1228 535 1257 541C1284 541 1266 505 1297 505Q1306 505 1325 513" />
    <path d="M1205 560C1285 562 1282 650 1238 668Q1222 672 1205 685" />
    <path d="M1243 583L1195 625 1080 690M1298 625h40M1316 682l10-6" />
    <path d="M951 640l7 50M951 648l96 12-84 32" strokeWidth="17" />
  </svg>
);

export default function App() {
  return (
    <main className="relative flex min-h-screen flex-col overflow-hidden bg-white pt-[31px] pr-[88px] pb-6 pl-[181px] font-['Open_Sans','Noto_Sans',sans-serif] text-[#222]">
      <Backdrop />
      <div className="relative flex flex-1 flex-col bg-[#efefef] shadow-[0_3px_9px_rgba(0,0,0,0.28)]">
        <header className="relative flex h-[18px] items-center bg-white">
          <svg viewBox="0 0 14 14" className="mr-0.5 size-3.5" aria-hidden="true">
            <circle cx="6.500" cy="6.500" r="4.700" fill="none" stroke="#67a02e" strokeWidth="2.800" />
            <path d="M6.500 6.500h3L13.500 11v2.500H11L6.500 9z" fill="#7fb537" />
            <path d="M6.500 5.500L9 8" stroke="#ee7913" strokeWidth="2.200" />
          </svg>
          <h1 className="text-[9px] leading-4">Untitled Project — QGIS</h1>
          <div className="ml-auto flex items-center gap-6 pr-3">
            <button type="button" aria-label="Minimize" className="flex size-3.5 items-center justify-center">
              <span className="h-px w-[9px] bg-[#666]" />
            </button>
            <button type="button" aria-label="Restore" className="flex size-3.5 items-center justify-center">
              <svg viewBox="0 0 10 10" className="size-2.5" fill="none">
                <path d="M3 2.500V1h6v6H7.500" stroke="#777" />
                <path d="M1 3h6v6H1z" stroke="#000" />
              </svg>
            </button>
            <button type="button" aria-label="Close window" className="flex size-3.5 items-center justify-center">
              <svg viewBox="0 0 10 10" className="size-2.5" stroke="#555" strokeWidth=".9">
                <path d="M1 1l8 8M9 1L1 9" />
              </svg>
            </button>
          </div>
          <Frame className="-top-2.5 -left-[18px] h-[30px] w-[154px]" />
          <Note className="-top-[9px] -left-[155px]">Project title</Note>
          <Note className="-top-[13px] left-[375px]">Main menu</Note>
        </header>

        <nav aria-label="Main menu" className="relative flex h-4 items-center pt-0.5 pl-1.5">
          <div className="flex gap-2.5">
            {menus.map(([a, b, c]) => (
              <button key={a + b + c} type="button" className="text-[9px] leading-3">
                {a}
                <u>{b}</u>
                {c}
              </button>
            ))}
          </div>
          <Frame className="-top-px -left-1 h-[21px] w-[532px]" />
        </nav>

        <div className="relative">
          <Toolbar items={rowOne} label="Navigation" />
          <Toolbar items={rowTwo} label="Digitizing" />
          <Toolbar items={rowThree} label="Plugins" />
          <Frame className="top-px -right-2.5 bottom-px left-0" />
          <Note className="top-[23px] left-[829px]">Toolbars</Note>
        </div>

        <div className="flex flex-1">
          <div className="flex w-[164px] flex-col">
            <section className="relative flex h-[162px] flex-col pl-px">
              <DockTitle>Browser</DockTitle>
              <DockTools items="addsel sync filter collapse info" />
              <div className="mt-px mr-1 flex h-[130px] overflow-hidden border border-[#cfcfcf] bg-white">
                <ul className="grid h-[132px] flex-1 grid-rows-9 pt-px">
                  {tree.map(([icon, text, more]) => (
                    <li key={text} className="flex items-center text-[9px] leading-3 whitespace-nowrap">
                      <span className="flex w-2.5 pl-px">
                        {more && (
                          <svg viewBox="0 0 4 6" className="h-1.5 w-1" aria-hidden="true">
                            <path d="M0 0l3.500 3L0 6z" fill="#666" />
                          </svg>
                        )}
                      </span>
                      <Icon name={icon} className="mr-0.5 size-3.5" />
                      {text}
                    </li>
                  ))}
                </ul>
                <div className="flex w-3 flex-col items-center border-l border-[#d5d5d5] bg-[#dedede]">
                  <button type="button" aria-label="Scroll up" className="flex h-3 w-full rotate-180 items-center justify-center bg-[#f3f3f3]">
                    <Caret dark />
                  </button>
                  <div className="h-10 w-full border-y border-[#d0d0d0] bg-[#f6f6f6]" />
                  <button type="button" aria-label="Scroll down" className="mt-auto flex h-3 w-full items-center justify-center bg-[#f3f3f3]">
                    <Caret dark />
                  </button>
                </div>
              </div>
              <Frame className="-top-1 -bottom-[3px] -left-3 w-[178px]" />
              <Note className="top-[50px] -left-28">
                Browser
                <br />
                pane
              </Note>
            </section>

            <section className="relative flex flex-1 flex-col pt-0.5 pl-px">
              <DockTitle>Layers</DockTitle>
              <DockTools items="brush group eye filter2 expr v expand collapse remove" />
              <div className="mt-0.5 mr-1 flex-1 border border-[#cfcfcf] bg-white" />
              <Frame className="top-0 -bottom-[5px] -left-[9px] w-[179px]" />
              <Note className="top-[149px] left-[42px]">
                Layers
                <br />
                pane
              </Note>
            </section>
          </div>

          <section aria-label="Map canvas" className="relative flex flex-1 items-center justify-center border border-[#e2e2e2] bg-white">
            <Frame className="top-1 right-[11px] bottom-[60px] left-3" />
            <Note className="top-[183px] left-[398px]">
              Map
              <br />
              canvas
            </Note>
          </section>
        </div>

        <footer className="flex h-[22px] items-center pl-px text-[8px] leading-3 whitespace-nowrap">
          <label className="flex h-4 w-[159px] items-center gap-[5px] border border-[#bdbdbd] bg-white pl-1.5">
            <svg viewBox="0 0 10 10" className="size-2.5" fill="none" stroke="#777" aria-hidden="true">
              <circle cx="4" cy="4" r="3.300" />
              <path d="M6.500 6.500L9.500 9.500" />
            </svg>
            <input aria-label="Locate" placeholder="Type to locate (Ctrl+K)" className="w-full bg-transparent text-[9px] outline-none placeholder:text-[#777]" />
          </label>

          <div className="relative ml-auto flex h-full items-center pr-1">
            <label htmlFor="coord" className="w-11">Coordinate</label>
            <input id="coord" defaultValue="11.49º,10.67º" className="h-4 w-16 border border-[#cfcfcf] bg-white pl-[3px] font-['DejaVu_Sans',sans-serif] text-[8px] outline-none" />
            <button type="button" aria-label="Toggle extents" className="ml-0.5 flex w-5 pl-px">
              <svg viewBox="0 0 14 14" className="size-3.5" fill="none" stroke="#333" strokeWidth="1.200" aria-hidden="true">
                <path d="M2 3l4 3-1-3.500q1.500-1.500 2.500 0L8 6M6 6L2.500 6Q1 7.500 3 8.500L6 9" />
                <path d="M6 6.500q3-1.500 5 1.500t-.500 4.500-5-1-.500-4.500M2 12L12 2M8 9l2.500 1" />
              </svg>
            </button>
            <label htmlFor="scale" className="w-[21px]">Scale</label>
            <span className="relative flex h-4 w-[63px] items-center border border-[#cfcfcf] bg-white">
              <select id="scale" className="h-full w-full appearance-none bg-transparent pl-px font-['DejaVu_Sans',sans-serif] text-[8px] outline-none">
                <option>1:6266001</option>
              </select>
              <span className="pointer-events-none absolute top-0 right-0 flex h-full w-4 items-center justify-center bg-[#f5f5f5]">
                <Caret dark />
              </span>
            </span>
            <Frame className="-top-2 -right-1 -left-[22px] h-[39px]" />
            <Note className="-top-[38px] -left-[18px]">Coordinates and scale</Note>
          </div>

          <svg viewBox="0 0 10 12" className="mr-1.5 h-3 w-2.5" aria-hidden="true">
            <path d="M2.500 6V3.500a2.500 2.500 0 015 0V6" fill="none" stroke="#888" strokeWidth="1.300" />
            <path d="M1 5.500h8.500V11H1z" fill="#6a6a6a" />
          </svg>
          <label htmlFor="mag" className="w-[37px]">Magnifier</label>
          <Spin id="mag" value="100%" className="w-[60px]" />
          <label htmlFor="rot" className="ml-1 w-[37px]">Rotation</label>
          <Spin id="rot" value="0.0 °" className="w-[56px]" />
          <label className="ml-1 flex items-center gap-1">
            <span className="relative flex size-[11px]">
              <input type="checkbox" defaultChecked className="size-[11px] appearance-none border border-[#bbb] bg-white" />
              <svg viewBox="0 0 10 10" className="pointer-events-none absolute inset-0 size-[11px]" fill="none" stroke="#111" strokeWidth="1.500" aria-hidden="true">
                <path d="M2 5l2.200 3L8 1.500" />
              </svg>
            </span>
            Render
          </label>

          <div className="relative ml-2 flex h-full w-[89px] items-center">
            <button type="button" className="flex items-center gap-px font-['DejaVu_Sans',sans-serif] text-[8px]">
              <svg viewBox="0 0 12 12" className="size-3" fill="none" stroke="#777" strokeWidth=".9" aria-hidden="true">
                <ellipse cx="6" cy="6" rx="5.500" ry="4.500" />
                <ellipse cx="6" cy="6" rx="2.500" ry="4.500" />
                <path d="M.5 6h11M1.500 3.700h9M1.500 8.300h9M6 1.500v9" />
              </svg>
              EPSG:4326
            </button>
            <button type="button" aria-label="Messages" className="mr-[3px] ml-auto">
              <svg viewBox="0 0 14 14" className="size-3.5" aria-hidden="true">
                <path d="M7 1.500q6 .2 6 4.800 0 2-1.500 3.200L13 13 8.500 11Q1 11.300 1 6.300 1 1.700 7 1.500z" fill="#666" />
                <path d="M3.500 6.500h1.500M6.200 6.500h1.600M9 6.500h1.500" stroke="#fff" strokeWidth="1.500" />
              </svg>
            </button>
            <Frame className="-top-2 -right-2.5 h-[39px] w-[107px]" />
            <Note className="-top-[38px] -right-[47px]">Coordinate system</Note>
          </div>
        </footer>
      </div>
    </main>
  );
}
